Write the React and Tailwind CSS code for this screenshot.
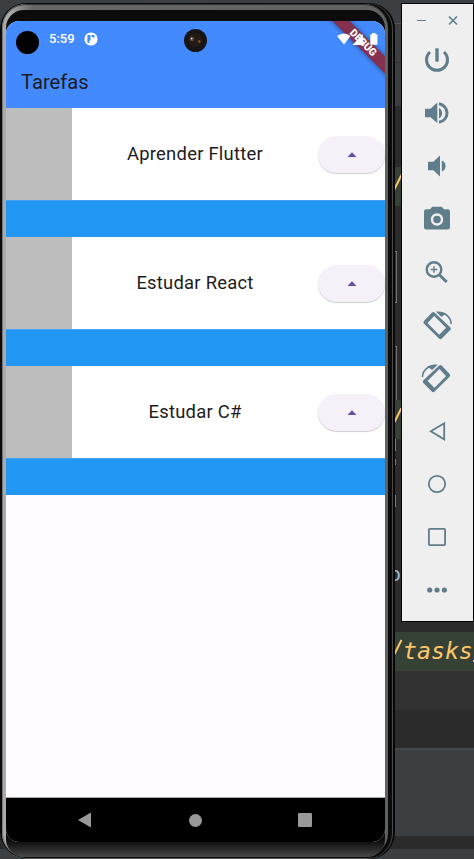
import React from 'react';

const TASKS = ['Aprender Flutter', 'Estudar React', 'Estudar C#'];

function Icon({ children }) {
  return (
    <svg viewBox="0 0 32 32" className="block size-8 shrink-0" fill="none" stroke="#607d8b" strokeWidth="2">
      {children}
    </svg>
  );
}

const solid = { fill: '#607d8b', stroke: 'none' };

function RotateShape() {
  return (
    <>
      <path
        {...solid}
        fillRule="evenodd"
        d="M11 3.6Q12.3 2.4 13.7 3.7L29.2 18.2Q30.5 19.6 29.2 21L20.8 29.5Q19.4 30.8 18 29.5L3 14.8Q1.7 13.4 3 12ZM12 5.8L5.2 12.7L19.3 26.9L26.2 20Z"
      />
      <path {...solid} d="M3 12.5L11 4.2L13.6 6.6L6.2 14.6ZM17 27L26.4 17.4L29.7 20L19.6 30Z" />
      <path d="M16 3.3C24 2.8 29.8 8 30.2 15" strokeWidth="1.6" />
      <path {...solid} d="M14.8 2.5L25 4.5L20.5 8Z" />
    </>
  );
}

function EmulatorTools() {
  return (
    <div className="absolute left-[401px] top-[3px] flex h-[619px] w-[73px] flex-col border border-black bg-[#efefef]">
      <div className="flex h-[40px] items-start justify-between pl-[14px] pr-[13px] pt-[9px]">
        <svg viewBox="0 0 12 14" className="h-3.5 w-3" stroke="#607d8b"><path d="M1 7.5H10" /></svg>
        <svg viewBox="0 0 14 14" className="size-3.5" stroke="#607d8b" strokeWidth="1.6"><path d="M3 3.5L11 11.5M11 3.5L3 11.5" /></svg>
      </div>
      <div className="flex flex-col items-center gap-[21px] pr-[1px]">
        <Icon>
          <path d="M9 8A10.5 10.5 0 1 0 23 8" strokeWidth="3" />
          <path d="M16 4.3V17.7" strokeWidth="3.4" />
        </Icon>
        <Icon>
          <path {...solid} d="M4 11.7H9.5L16.3 5.5V26L9.5 20.3H4ZM18 11A6 6 0 0 1 18 21.5Z" />
          <path d="M18 6.7A9.4 9.4 0 0 1 18 25.3" strokeWidth="3" />
        </Icon>
        <Icon>
          <path {...solid} d="M7 11.7H12.3L19 5.5V26.5L12.3 20.3H7ZM20.8 10.5A5.9 5.9 0 0 1 20.8 21.5Z" />
        </Icon>
        <Icon>
          <path {...solid} d="M5.2 6.2H9L11.3 3.7H20.7L23 6.2H26.8Q29 6.2 29 8.5V24.5Q29 26.5 26.8 26.5H5.2Q3 26.5 3 24.5V8.5Q3 6.2 5.2 6.2Z" />
          <circle cx="16" cy="16.5" r="5" stroke="#efefef" strokeWidth="2.4" />
        </Icon>
        <Icon>
          <circle cx="13" cy="13.5" r="7.3" strokeWidth="2.4" />
          <path d="M9.7 13.5H16.3M13 10.2V16.8" strokeWidth="1.4" />
          <path d="M18 18.5L25.7 26" strokeWidth="3" />
        </Icon>
        <Icon><RotateShape /></Icon>
        <Icon><g transform="translate(31.6 0) scale(-1 1)"><RotateShape /></g></Icon>
        <Icon><path d="M23.2 8.3V24.3L9.8 16.3Z" strokeWidth="1.8" /></Icon>
        <Icon><circle cx="16" cy="16" r="8.2" strokeWidth="1.8" /></Icon>
        <Icon><rect x="7.9" y="7.9" width="16.2" height="16.2" rx="0.8" strokeWidth="1.8" /></Icon>
        <Icon>
          <g {...solid}><circle cx="8.7" cy="16" r="2.6" /><circle cx="16" cy="16" r="2.6" /><circle cx="23.4" cy="16" r="2.6" /></g>
        </Icon>
      </div>
    </div>
  );
}

function CodeLine({ children }) {
  return (
    <div className="flex h-[39px] shrink-0 items-center overflow-hidden whitespace-pre bg-[#364135] pl-[388px] font-['DejaVu_Sans_Mono','Liberation_Mono',monospace] text-[23.2px] italic text-[#ffc66d]">
      <svg viewBox="0 0 15 24" className="mb-1 h-6 w-[15px] shrink-0" stroke="#ffc66d" strokeWidth="1.9">
        <path d="M3 23L13.5 2" />
      </svg>
      {children}
    </div>
  );
}

function Editor() {
  return (
    <div className="flex h-full flex-col bg-[#2b2b2b]">
      <div className="h-6 shrink-0 border-b border-[#555759] bg-[#3c3f41]" />
      <div className="h-[39px] shrink-0 border-b border-[#323232] bg-[#3c3f41]" />
      <div className="h-[43px] shrink-0 bg-[#3c3f41]" />
      <div className="h-[61px] shrink-0" />
      <CodeLine />
      <div className="flex h-[194px] shrink-0 flex-col items-start gap-[43px] pl-[392px] pt-[45px]">
        <div className="h-[52px] w-[5px] shrink-0 border border-l-0 border-[#777]" />
        <div className="h-[54px] w-[5px] shrink-0 border border-b-0 border-l-0 border-[#777]" />
      </div>
      <CodeLine />
      <div className="flex h-[193px] shrink-0 flex-col items-start pl-[395px]">
        <div className="h-3 w-px bg-[#777]" />
        <div className="mt-2 h-1.5 w-px bg-[#777]" />
        <div className="mt-[30px] h-3 w-px bg-[#777]" />
        <div className="ml-[-6px] mt-[55px] font-['DejaVu_Sans_Mono',monospace] text-[20px] leading-6 text-[#9cb9dc]">o</div>
      </div>
      <CodeLine>
        <span>tasks</span>
        <div className="mt-[19px] h-0.5 w-0.5 bg-[#ffc66d]" />
      </CodeLine>
      <div className="h-[39px] shrink-0 bg-[#323232]" />
      <div className="h-[38px] shrink-0" />
      <div className="h-[88px] shrink-0 border-t-2 border-[#45484a] bg-[#3c3f41]" />
      <div className="h-[13px] shrink-0" />
      <div className="grow bg-[#3c3f41]" />
    </div>
  );
}

function StatusBar() {
  return (
    <div className="relative flex h-9 items-center text-white">
      <div className="ml-[10px] mt-[7px] size-[23px] rounded-full bg-black" />
      <span className="ml-[10px] w-[27px] whitespace-nowrap font-['Roboto'] text-[13px] font-medium">5:59</span>
      <svg viewBox="0 0 14 14" className="ml-[8px] size-3.5">
        <circle cx="7" cy="7" r="6.6" fill="#fff" />
        <path d="M3.4 3H6.5V8.5H5.3V11H3.4ZM7.5 3H10.5V5.5H9L7.5 4.5Z" fill="#448aff" />
      </svg>
      <div className="ml-[86px] mt-[2px] flex size-[23px] items-center justify-center rounded-full bg-[#151515]">
        <svg viewBox="0 0 23 23" className="size-[23px]">
          <circle cx="11" cy="11" r="7" fill="#241b17" />
          <circle cx="8" cy="10" r="2.2" fill="#5b4c45" />
          <circle cx="7.6" cy="9.6" r="0.8" fill="#ddd" />
          <circle cx="15.3" cy="12.5" r="1.2" fill="#8a5a20" />
        </svg>
      </div>
      <svg viewBox="0 0 42 14" className="ml-[130px] h-3.5 w-[42px]" fill="#fff">
        <path d="M0 4Q7 -1 13.5 4L7 12.5Z" />
        <path d="M15.5 13L26 2V13Z" />
        <path d="M33.3 2.4H35.1V1H38.5V2.4H40.4V12.8H33.3Z" />
      </svg>
    </div>
  );
}

function TaskRow({ title }) {
  return (
    <>
      <div className="flex h-[92px] shrink-0 items-center bg-white">
        <div className="h-full w-[66px] shrink-0 bg-[#bdbdbd]" />
        <div className="grow text-center font-['Roboto'] text-[18.4px] tracking-[0.25px] text-[#1d1b20]">{title}</div>
        <div className="flex h-[37px] w-[67px] shrink-0 items-center justify-center rounded-full bg-[#f6f1f9] shadow-[0_1px_1px_rgba(0,0,0,0.2)]">
          <svg viewBox="0 0 10 5" className="h-[5px] w-[10px]"><path d="M0.5 5L5 0.3L9.5 5Z" fill="#6750a4" /></svg>
        </div>
      </div>
      <div className="h-[37px] shrink-0 border-t border-[#42a3f5] bg-[#2196f3]" />
    </>
  );
}

function Phone() {
  return (
    <div className="absolute left-0 top-[3px] h-[856px] w-[395px] rounded-[26px] bg-[#0b0b0b] pb-[2px] pl-[2px] pr-[7px] pt-px shadow-[inset_-2px_0_0_#080808,inset_-3px_0_0_#4a4a4a,inset_0_-1px_0_#555]">
      <div className="h-full rounded-[24px] bg-linear-to-r from-[#aaaaaa] from-2% via-[#666666] via-8% to-[#606262] pl-1 pr-[3px] pt-[6px] shadow-[inset_1px_0_0_#777,inset_0_1px_0_#333]">
        <div className="flex h-full flex-col rounded-[18px] bg-linear-to-b from-[#0b0b0b] from-98% to-[#484848] pb-[15px] pt-[11px]">
          <div className="relative flex grow flex-col overflow-hidden rounded-[13px] bg-[#fffbfe]">
            <div className="relative h-[87px] shrink-0 bg-[#448aff]">
              <div className="absolute right-[-28px] top-[16px] flex h-[12px] w-[100px] rotate-45 items-center justify-center bg-[#86304f] font-['Roboto'] text-[10.4px] font-black leading-none text-white shadow-[0_0_5px_rgba(0,0,0,0.5)]">
                DEBUG
              </div>
              <StatusBar />
              <div className="flex h-[51px] items-center pl-[15px] font-['Roboto'] text-[20.2px] text-[#1d1b20]">Tarefas</div>
            </div>
            {TASKS.map((t) => <TaskRow key={t} title={t} />)}
            <div className="grow" />
            <div className="flex h-[45px] shrink-0 items-center justify-between border-t border-[#aaa] bg-black pl-[71px] pr-[73px]">
              <svg viewBox="0 0 15 16" className="h-4 w-[15px]"><path d="M1 8L14 0.5V15.5Z" fill="#999" /></svg>
              <div className="size-[13px] rounded-full bg-[#999]" />
              <div className="size-[14px] rounded-[1px] bg-[#999]" />
            </div>
          </div>
        </div>
      </div>
    </div>
  );
}

export default function App() {
  return (
    <div className="relative h-[859px] w-[474px] overflow-hidden">
      <Editor />
      <Phone />
      <EmulatorTools />
    </div>
  );
}
